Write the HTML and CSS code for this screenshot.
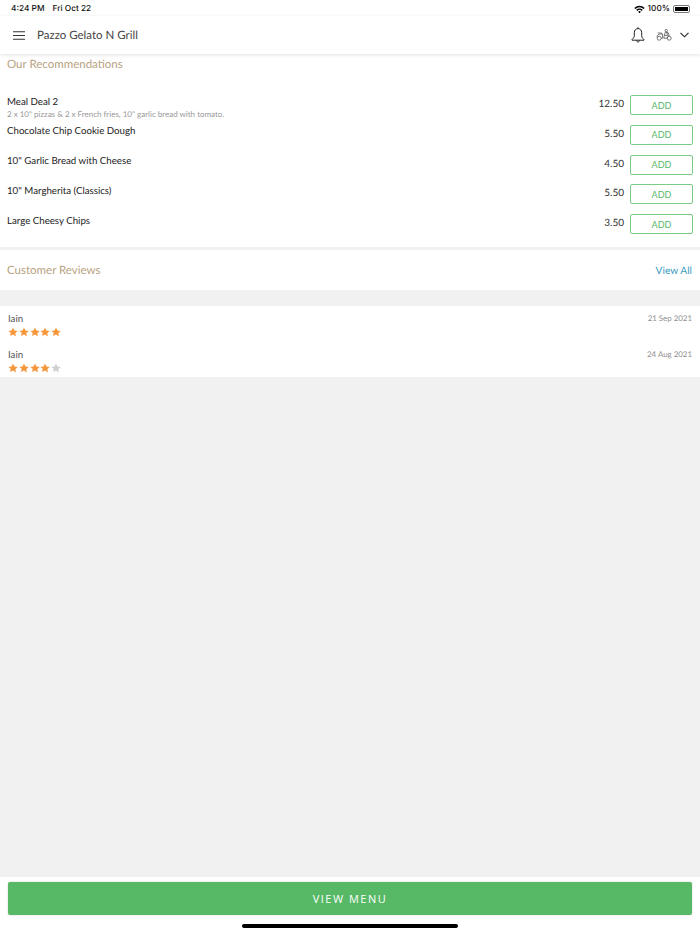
FILE: index.html
```html
<!DOCTYPE html>
<html lang="en">
<head>
    <meta charset="UTF-8">
    <meta name="viewport" content="width=device-width, initial-scale=1.0">
    <title>Pazzo Gelato N Grill</title>
    <link rel="stylesheet" href="styles.css">
</head>
<body>
    <div class="app">
        <div class="statusbar">
            <div class="status-left"><span>4:24 PM</span><span>Fri Oct 22</span></div>
            <div class="status-right">
                <svg class="wifi" width="11" height="9" viewBox="0 0 11 9">
                    <path d="M0.3 2.9A7.4 7.4 0 0 1 10.7 2.9L9.6 4A5.8 5.8 0 0 0 1.4 4Z" fill="#000"/>
                    <path d="M2.2 4.8A4.7 4.7 0 0 1 8.8 4.8L7.7 5.9A3.1 3.1 0 0 0 3.3 5.9Z" fill="#000"/>
                    <path d="M4.1 6.8A2 2 0 0 1 6.9 6.8L5.5 8.3Z" fill="#000"/>
                </svg>
                <span>100%</span>
                <span class="battery"><span class="battery-fill"></span></span>
            </div>
        </div>

        <header class="topbar">
            <svg class="menu-icon" width="12" height="9" viewBox="0 0 12 9">
                <path d="M0 0.7H12M0 4.5H12M0 8.3H12" stroke="#333" stroke-width="1.1" fill="none"/>
            </svg>
            <div class="topbar-title">Pazzo Gelato N Grill</div>
            <svg class="bell-icon" width="14" height="16" viewBox="0 0 14 16">
                <path d="M7 1.6C4.8 1.6 3.3 3.3 3.3 5.6V8.8C3.3 10.4 2.3 11.2 1 12.6V13.2H13V12.6C11.7 11.2 10.7 10.4 10.7 8.8V5.6C10.7 3.3 9.2 1.6 7 1.6Z" stroke="#222" stroke-width="1" fill="none"/>
                <path d="M5.6 13.4C5.6 15.5 8.4 15.5 8.4 13.4M7 0.3V1.6" stroke="#222" stroke-width="1" fill="none"/>
            </svg>
            <svg class="scooter-icon" width="16" height="12" viewBox="0 0 16 12">
                <circle cx="3.2" cy="9.2" r="2" stroke="#555" stroke-width="0.8" fill="none"/>
                <circle cx="13.2" cy="9.2" r="2" stroke="#555" stroke-width="0.8" fill="none"/>
                <path d="M1 8.2C1.2 6 2.6 5 4.6 5H6.4L6.9 9.2H5.2M1.6 4H5.6L6 5" stroke="#555" stroke-width="0.8" fill="none"/>
                <circle cx="10.2" cy="1.6" r="1.2" stroke="#555" stroke-width="0.8" fill="none"/>
                <path d="M9.2 3.4L8 7.6V9.2H11.2C11.3 7.8 12 7 13.2 6.9L12 3.4H9.2ZM10.8 3.4L11.6 6.4H8.4" stroke="#555" stroke-width="0.8" fill="none"/>
            </svg>
            <svg class="chevron-icon" width="9" height="6" viewBox="0 0 9 6">
                <path d="M0.5 0.8L4.5 4.8L8.5 0.8" stroke="#222" stroke-width="1.1" fill="none"/>
            </svg>
        </header>

        <section class="recommendations">
            <h2 class="section-title">Our Recommendations</h2>
            <div class="dish-list">
                <div class="dish">
                    <div class="dish-info">
                        <div class="dish-name">Meal Deal 2</div>
                        <div class="dish-desc">2 x 10" pizzas &amp; 2 x French fries, 10" garlic bread with tomato.</div>
                    </div>
                    <div class="dish-price">12.50</div>
                    <button class="add-btn">ADD</button>
                </div>
                <div class="dish">
                    <div class="dish-info"><div class="dish-name">Chocolate Chip Cookie Dough</div></div>
                    <div class="dish-price">5.50</div>
                    <button class="add-btn">ADD</button>
                </div>
                <div class="dish">
                    <div class="dish-info"><div class="dish-name">10" Garlic Bread with Cheese</div></div>
                    <div class="dish-price">4.50</div>
                    <button class="add-btn">ADD</button>
                </div>
                <div class="dish">
                    <div class="dish-info"><div class="dish-name">10" Margherita (Classics)</div></div>
                    <div class="dish-price">5.50</div>
                    <button class="add-btn">ADD</button>
                </div>
                <div class="dish">
                    <div class="dish-info"><div class="dish-name">Large Cheesy Chips</div></div>
                    <div class="dish-price">3.50</div>
                    <button class="add-btn">ADD</button>
                </div>
            </div>
        </section>

        <section class="reviews-head">
            <h2 class="section-title">Customer Reviews</h2>
            <a class="view-all">View All</a>
        </section>

        <section class="reviews">
            <div class="review">
                <div>
                    <div class="review-name">Iain</div>
                    <div class="stars">
                        <svg width="10" height="10" viewBox="0 0 24 24"><path class="on" d="M12 1l3.4 7.3 7.9 1-5.8 5.4 1.5 7.9L12 17.7l-7 3.9 1.5-7.9L.7 9.3l7.9-1z"/></svg>
                        <svg width="10" height="10" viewBox="0 0 24 24"><path class="on" d="M12 1l3.4 7.3 7.9 1-5.8 5.4 1.5 7.9L12 17.7l-7 3.9 1.5-7.9L.7 9.3l7.9-1z"/></svg>
                        <svg width="10" height="10" viewBox="0 0 24 24"><path class="on" d="M12 1l3.4 7.3 7.9 1-5.8 5.4 1.5 7.9L12 17.7l-7 3.9 1.5-7.9L.7 9.3l7.9-1z"/></svg>
                        <svg width="10" height="10" viewBox="0 0 24 24"><path class="on" d="M12 1l3.4 7.3 7.9 1-5.8 5.4 1.5 7.9L12 17.7l-7 3.9 1.5-7.9L.7 9.3l7.9-1z"/></svg>
                        <svg width="10" height="10" viewBox="0 0 24 24"><path class="on" d="M12 1l3.4 7.3 7.9 1-5.8 5.4 1.5 7.9L12 17.7l-7 3.9 1.5-7.9L.7 9.3l7.9-1z"/></svg>
                    </div>
                </div>
                <div class="review-date">21 Sep 2021</div>
            </div>
            <div class="review">
                <div>
                    <div class="review-name">Iain</div>
                    <div class="stars">
                        <svg width="10" height="10" viewBox="0 0 24 24"><path class="on" d="M12 1l3.4 7.3 7.9 1-5.8 5.4 1.5 7.9L12 17.7l-7 3.9 1.5-7.9L.7 9.3l7.9-1z"/></svg>
                        <svg width="10" height="10" viewBox="0 0 24 24"><path class="on" d="M12 1l3.4 7.3 7.9 1-5.8 5.4 1.5 7.9L12 17.7l-7 3.9 1.5-7.9L.7 9.3l7.9-1z"/></svg>
                        <svg width="10" height="10" viewBox="0 0 24 24"><path class="on" d="M12 1l3.4 7.3 7.9 1-5.8 5.4 1.5 7.9L12 17.7l-7 3.9 1.5-7.9L.7 9.3l7.9-1z"/></svg>
                        <svg width="10" height="10" viewBox="0 0 24 24"><path class="on" d="M12 1l3.4 7.3 7.9 1-5.8 5.4 1.5 7.9L12 17.7l-7 3.9 1.5-7.9L.7 9.3l7.9-1z"/></svg>
                        <svg width="10" height="10" viewBox="0 0 24 24"><path class="off" d="M12 1l3.4 7.3 7.9 1-5.8 5.4 1.5 7.9L12 17.7l-7 3.9 1.5-7.9L.7 9.3l7.9-1z"/></svg>
                    </div>
                </div>
                <div class="review-date">24 Aug 2021</div>
            </div>
        </section>

        <div class="spacer"></div>

        <footer class="footer">
            <button class="menu-btn">VIEW MENU</button>
            <div class="home-indicator"></div>
        </footer>
    </div>
</body>
</html>
```

FILE: styles.css
```css
* {
    box-sizing: border-box;
}
html, body {
    margin: 0;
    padding: 0;
}
body {
    font-family: "Lato", "Liberation Sans", sans-serif;
    background-color: #f1f1f1;
    color: #222;
    text-rendering: geometricPrecision;
}
.app {
    width: 700px;
    height: 934px;
    display: flex;
    flex-direction: column;
    overflow: hidden;
}
.statusbar {
    height: 16px;
    background: white;
    padding: 3px 10px 0 11px;
    display: flex;
    justify-content: space-between;
    font-family: "Inter", "Liberation Sans", sans-serif;
    font-size: 8.3px;
    line-height: 12px;
    font-weight: 500;
    color: #111;
}
.status-left {
    display: flex;
    gap: 8px;
}
.status-right {
    display: flex;
    align-items: center;
    gap: 3px;
    height: 12px;
}
.battery {
    width: 17px;
    height: 8px;
    border: 1px solid #777;
    border-radius: 2px;
    padding: 1px;
    display: block;
}
.battery-fill {
    display: block;
    height: 100%;
    background: #000;
}
.topbar {
    height: 38px;
    flex: none;
    background: white;
    display: flex;
    align-items: center;
    padding: 0 11px 0 13px;
    box-shadow: 0 1px 4px rgba(0,0,0,0.12);
    position: relative;
}
.topbar-title {
    flex: 1;
    margin-left: 12px;
    font-size: 11.5px;
    color: #444;
}
.bell-icon {
    margin-right: 11px;
}
.scooter-icon {
    margin-right: 8px;
}
.section-title {
    margin: 0;
    font-size: 11.5px;
    line-height: 14px;
    font-weight: 400;
    color: #b7a27f;
}
.recommendations {
    height: 193px;
    flex: none;
    background: white;
    padding: 4px 7px 0 7px;
}
.dish-list {
    margin-top: 23px;
    display: flex;
    flex-direction: column;
}
.dish {
    height: 29.8px;
    display: flex;
    align-items: flex-start;
}
.dish-info {
    flex: 1;
    padding-top: 0.5px;
}
.dish-name {
    font-size: 9.7px;
    line-height: 13px;
    color: #222;
}
.dish-desc {
    font-size: 8px;
    line-height: 10px;
    color: #999;
}
.dish-price {
    font-size: 10px;
    line-height: 13px;
    padding-top: 3px;
    margin-right: 6px;
    color: #333;
}
.add-btn {
    width: 63px;
    height: 20px;
    background: white;
    border: 1px solid #7bcb86;
    border-radius: 2px;
    color: #55b868;
    font-family: inherit;
    font-size: 9px;
    padding: 0;
}
.reviews-head {
    margin-top: 3px;
    height: 40px;
    flex: none;
    background: white;
    display: flex;
    align-items: center;
    justify-content: space-between;
    padding: 2px 8px 0 7px;
}
.view-all {
    font-size: 10.2px;
    line-height: 14px;
    color: #3d9cc0;
}
.reviews {
    margin-top: 16px;
    height: 71px;
    flex: none;
    background: white;
    padding-top: 7px;
}
.review {
    height: 36px;
    display: flex;
    justify-content: space-between;
    padding: 0 8px;
}
.review-name {
    font-size: 9.7px;
    line-height: 13px;
    color: #555;
}
.stars {
    display: flex;
    margin-top: 1px;
    gap: 0.75px;
    height: 10px;
}
.stars svg {
    display: block;
}
.on {
    fill: #f5973a;
}
.off {
    fill: #cfcfcf;
}
.review-date {
    font-size: 7.9px;
    line-height: 11px;
    color: #8f8f8f;
}
.spacer {
    flex: 1;
}
.footer {
    height: 57px;
    flex: none;
    background: white;
    padding: 5px 8px 0 8px;
}
.menu-btn {
    display: block;
    width: 684px;
    height: 33px;
    background: #57b866;
    border: none;
    border-radius: 2px;
    box-shadow: 0 0 2px rgba(0,0,0,0.2);
    color: white;
    font-family: "Open Sans", sans-serif;
    font-size: 11px;
    letter-spacing: 1.5px;
}
.home-indicator {
    width: 216px;
    height: 4px;
    margin: 9px auto 0 auto;
    background: #000;
    border-radius: 2px;
}
```
